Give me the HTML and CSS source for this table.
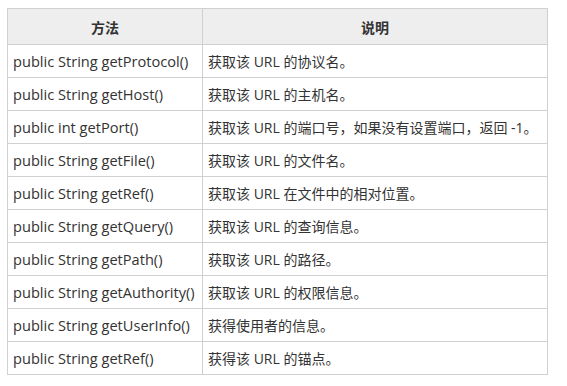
FILE: index.html
```html
<!DOCTYPE html>
<html lang="zh">
<head>
<meta charset="utf-8">
<link rel="stylesheet" href="styles.css">
</head>
<body>
<table class="ref-table">
  <thead>
    <tr><th class="col-method">方法</th><th class="col-desc">说明</th></tr>
  </thead>
  <tbody>
    <tr><td class="method">public String getProtocol()</td><td>获取该 URL 的协议名。</td></tr>
    <tr><td class="method">public String getHost()</td><td>获取该 URL 的主机名。</td></tr>
    <tr><td class="method">public int getPort()</td><td>获取该 URL 的端口号，如果没有设置端口，返回 -1。</td></tr>
    <tr><td class="method">public String getFile()</td><td>获取该 URL 的文件名。</td></tr>
    <tr><td class="method">public String getRef()</td><td>获取该 URL 在文件中的相对位置。</td></tr>
    <tr><td class="method">public String getQuery()</td><td>获取该 URL 的查询信息。</td></tr>
    <tr><td class="method">public String getPath()</td><td>获取该 URL 的路径。</td></tr>
    <tr><td class="method">public String getAuthority()</td><td>获取该 URL 的权限信息。</td></tr>
    <tr><td class="method">public String getUserInfo()</td><td>获得使用者的信息。</td></tr>
    <tr><td class="method">public String getRef()</td><td>获得该 URL 的锚点。</td></tr>
  </tbody>
</table>
</body>
</html>
```
FILE: styles.css
```css
html, body {
  margin: 0;
  background: #fff;
}
body {
  padding: 8px 7px;
  font-family: "Open Sans", "Noto Sans CJK SC", sans-serif;
  font-size: 14px;
  color: #333;
}
.ref-table {
  border-collapse: collapse;
  width: 541px;
  table-layout: fixed;
}
.col-method { width: 195px; }
.ref-table th,
.ref-table td {
  border: 1px solid #d0d0d0;
  text-align: left;
  padding: 0 5px;
  white-space: nowrap;
  overflow: hidden;
}
.ref-table th {
  background: #eeeeee;
  font-weight: bold;
  text-align: center;
  height: 36px;
  box-sizing: border-box;
}
.ref-table td {
  height: 33px;
  box-sizing: border-box;
}
.ref-table td.method {
  font-size: 14.6px;
}
```
